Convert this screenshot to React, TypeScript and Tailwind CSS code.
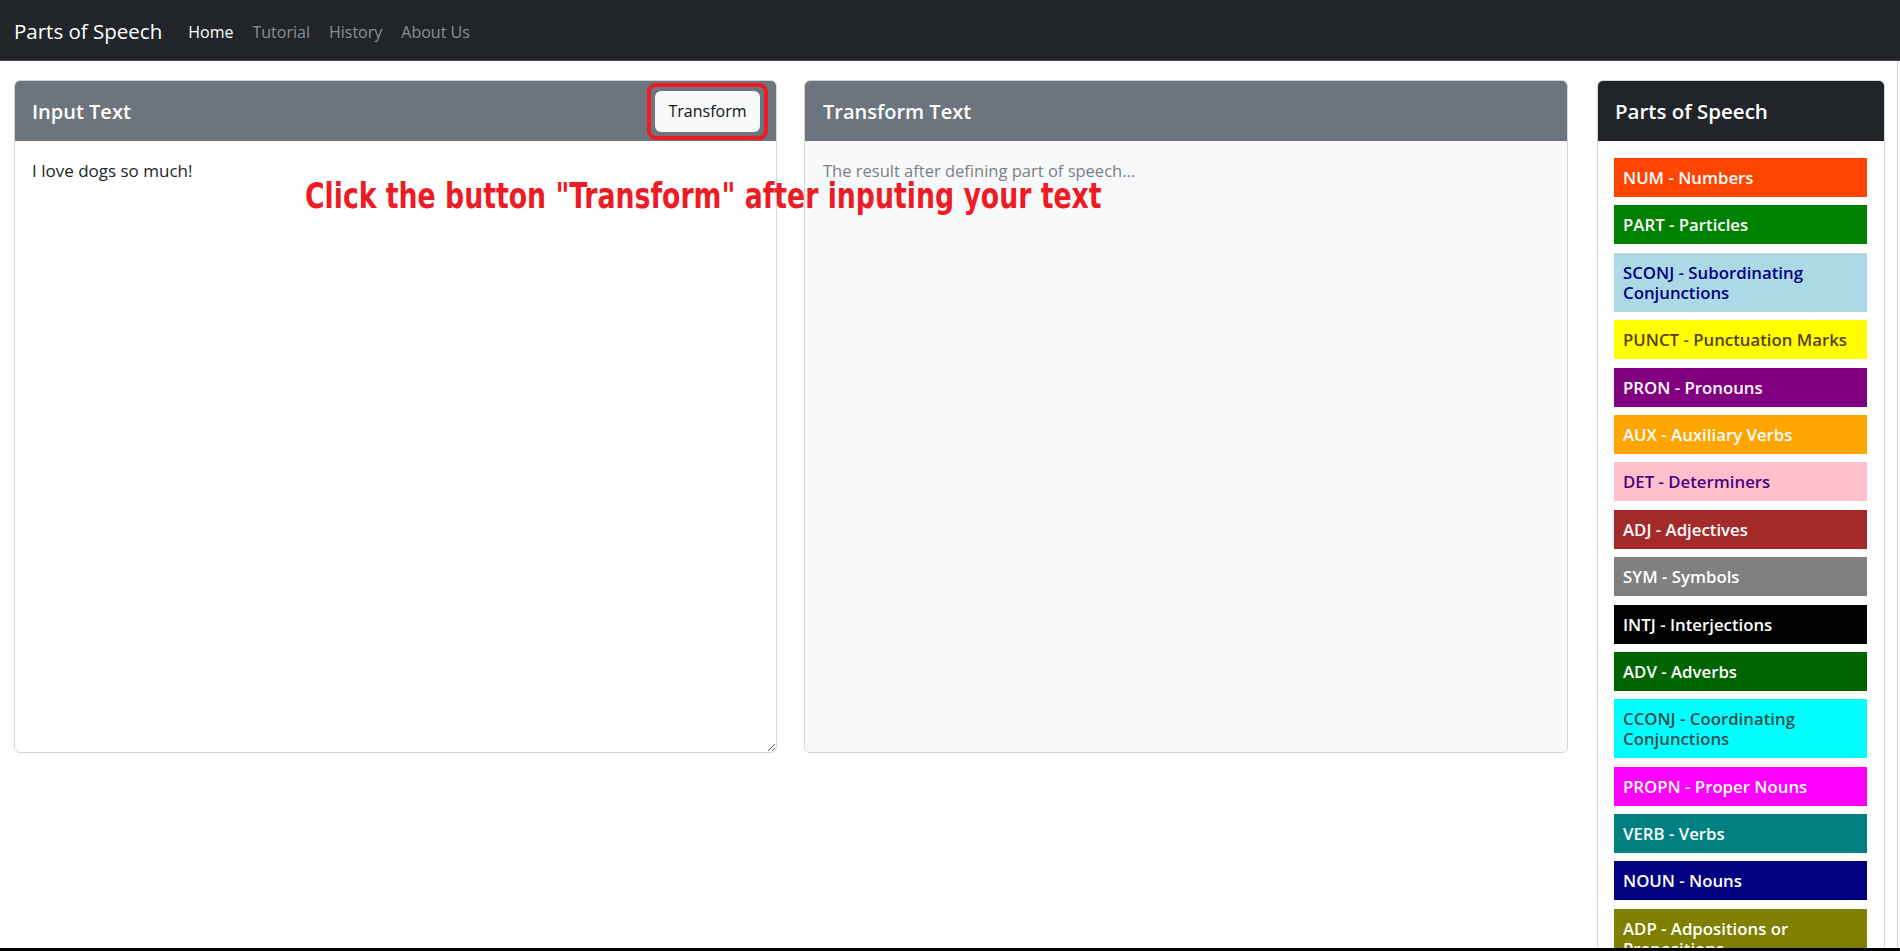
import React from "react";

const items: { label: string; bg: string; fg: string }[] = [
  { label: "NUM - Numbers", bg: "bg-[#ff4500]", fg: "text-white" },
  { label: "PART - Particles", bg: "bg-[#008000]", fg: "text-white" },
  { label: "SCONJ - Subordinating Conjunctions", bg: "bg-[#add8e6]", fg: "text-[#000080]" },
  { label: "PUNCT - Punctuation Marks", bg: "bg-[#ffff00]", fg: "text-[#5a4012]" },
  { label: "PRON - Pronouns", bg: "bg-[#800080]", fg: "text-white" },
  { label: "AUX - Auxiliary Verbs", bg: "bg-[#ffa500]", fg: "text-white" },
  { label: "DET - Determiners", bg: "bg-[#ffc0cb]", fg: "text-[#4b0082]" },
  { label: "ADJ - Adjectives", bg: "bg-[#a52a2a]", fg: "text-white" },
  { label: "SYM - Symbols", bg: "bg-[#808080]", fg: "text-white" },
  { label: "INTJ - Interjections", bg: "bg-black", fg: "text-white" },
  { label: "ADV - Adverbs", bg: "bg-[#006400]", fg: "text-white" },
  { label: "CCONJ - Coordinating Conjunctions", bg: "bg-[#00ffff]", fg: "text-[#2f4f4f]" },
  { label: "PROPN - Proper Nouns", bg: "bg-[#ff00ff]", fg: "text-white" },
  { label: "VERB - Verbs", bg: "bg-[#008080]", fg: "text-white" },
  { label: "NOUN - Nouns", bg: "bg-[#000080]", fg: "text-white" },
  { label: "ADP - Adpositions or Prepositions", bg: "bg-[#808000]", fg: "text-white" },
];

export default function App() {
  return (
    <div
      className="relative h-[951px] w-[1900px] overflow-hidden flex flex-col bg-white text-[#212529]"
      style={{ fontFamily: '"Open Sans", "Noto Sans", sans-serif' }}
    >
      <nav className="h-[61px] shrink-0 bg-[#212529] border-b border-[#45484c] flex items-center pl-[14px] pt-[3px]">
        <span className="text-[20.5px] text-white mr-[26px] leading-none">Parts of Speech</span>
        <div className="flex items-center gap-[19px] text-[16px] leading-none">
          <span className="text-white">Home</span>
          <span className="text-[#8d8f91]">Tutorial</span>
          <span className="text-[#8d8f91]">History</span>
          <span className="text-[#8d8f91]">About Us</span>
        </div>
      </nav>

      <main className="flex-1 min-h-0 flex items-start pl-[14px] pt-[19px] w-[1898px] border-r border-[#d4d4d4]">
        {/* Input card */}
        <section className="w-[763px] shrink-0 rounded-[6px] border border-[#d3d5d8] overflow-hidden">
          <header className="h-[60px] bg-[#6c757d] flex items-center justify-between pl-[17px] pr-[16px]">
            <h2 className="text-[20px] font-semibold text-white pt-[1px]">Input Text</h2>
            <div className="rounded-[9px] border-[4px] border-[#ed1c24] p-[4px] -mr-[8px]">
              <button className="h-[41px] w-[105px] rounded-[6px] bg-[#f8f9fa] text-[16px] text-[#111]">
                Transform
              </button>
            </div>
          </header>
          <textarea
            className="block w-full h-[611px] px-[17px] pt-[18px] pb-[16px] text-[17px] leading-[24px] text-[#212529] resize-y outline-none bg-white"
            defaultValue="I love dogs so much!"
          />
        </section>

        {/* Transform card */}
        <section className="ml-[27px] w-[764px] shrink-0 rounded-[6px] border border-[#d3d5d8] overflow-hidden">
          <header className="h-[60px] bg-[#6c757d] flex items-center pl-[18px]">
            <h2 className="text-[20px] font-semibold text-white pt-[1px]">Transform Text</h2>
          </header>
          <div className="h-[611px] bg-[#f8f9fa] px-[18px] pt-[18px] text-[16.5px] leading-[24px] text-[#7a8086]">
            The result after defining part of speech...
          </div>
        </section>

        {/* Sidebar */}
        <aside className="ml-[29px] w-[288px] shrink-0 rounded-[6px] border border-[#d3d5d8] overflow-hidden">
          <header className="h-[60px] bg-[#212529] flex items-center pl-[17px]">
            <h2 className="text-[20.5px] font-semibold text-white">Parts of Speech</h2>
          </header>
          <div className="pt-[17px] pl-[16px] pr-[17px] flex flex-col gap-[8.4px]">
            {items.map((it) => (
              <div
                key={it.label}
                className={`${it.bg} ${it.fg} px-[9px] pt-[10px] pb-[9px] text-[16.8px] leading-[20px] font-semibold`}
              >
                {it.label}
              </div>
            ))}
          </div>
        </aside>
      </main>

      <div className="h-[3px] shrink-0 bg-black" />

      {/* Annotation overlay */}
      <div
        className="absolute left-[305px] top-[174px] text-[36px] font-bold text-[#ed1c24] whitespace-nowrap origin-left scale-x-[0.825] leading-[44px]"
        style={{ fontFamily: '"DejaVu Sans Condensed", "DejaVu Sans", sans-serif' }}
      >
        Click the button "Transform" after inputing your text
      </div>
    </div>
  );
}
